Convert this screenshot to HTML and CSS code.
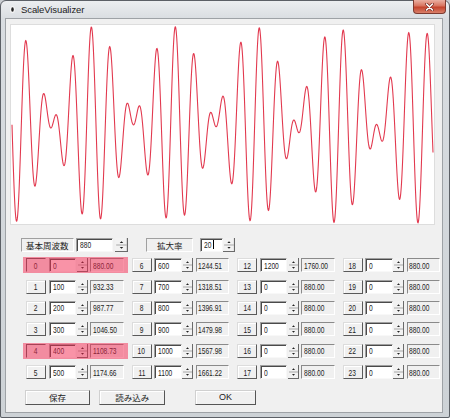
FILE: index.html
```html
<!DOCTYPE html>
<html lang="ja">
<head>
    <meta charset="UTF-8">
    <meta name="viewport" content="width=device-width, initial-scale=1.0">
    <title>ScaleVisualizer</title>
    <link rel="stylesheet" href="styles.css">
</head>
<body>

    <div class="window">
        <div class="titlebar">
            <svg class="app-icon" width="5" height="7" viewBox="0 0 5 7">
                <ellipse cx="2.5" cy="3.5" rx="2.5" ry="3.5" fill="#f4f4f4"/>
                <ellipse cx="2.5" cy="3.5" rx="1.3" ry="2.3" fill="#222"/>
            </svg>
            <span class="title">ScaleVisualizer</span>
            <div class="close">
                <svg width="9" height="8" viewBox="0 0 9 8">
                    <path d="M1.5 1l6 6M7.5 1l-6 6" stroke="#7a2a20" stroke-width="3" stroke-linecap="round"/>
                    <path d="M1.5 1l6 6M7.5 1l-6 6" stroke="#fff" stroke-width="1.6" stroke-linecap="round"/>
                </svg>
            </div>
        </div>

        <div class="client">
            <div class="plot">
                <svg id="wave" width="423" height="199" viewBox="0 0 423 199">
                    <polyline id="wave-line" fill="none" stroke="#e2394f" stroke-width="1.1" points=""/>
                </svg>
            </div>

            <div class="top-row">
                <div class="caption cap-base">基本周波数</div>
                <div class="edit ed-base"><span class="n">880</span></div>
                <svg class="spin spin-base" width="13" height="14" viewBox="0 0 11 14" preserveAspectRatio="none">
                    <rect width="11" height="14" fill="#f2f2f2"/>
                    <path d="M10.5 0v14M0 13.5h11" stroke="#6a6a6a"/>
                    <path d="M1 7h9" stroke="#a8a8a8"/>
                    <path d="M4 5h3L5.5 3.2zM4 9h3L5.5 10.8z" fill="#222"/>
                </svg>
                <div class="caption cap-zoom">拡大率</div>
                <div class="edit ed-zoom"><span class="n">20</span><span class="caret"></span></div>
                <svg class="spin spin-zoom" width="12" height="14" viewBox="0 0 11 14" preserveAspectRatio="none">
                    <rect width="11" height="14" fill="#f2f2f2"/>
                    <path d="M10.5 0v14M0 13.5h11" stroke="#6a6a6a"/>
                    <path d="M1 7h9" stroke="#a8a8a8"/>
                    <path d="M4 5h3L5.5 3.2zM4 9h3L5.5 10.8z" fill="#222"/>
                </svg>
            </div>

            <div class="grid" id="grid"></div>

            <div class="buttons">
                <button class="btn btn-save">保存</button>
                <button class="btn btn-load">読み込み</button>
                <button class="btn btn-ok">OK</button>
            </div>
        </div>
    </div>

    <script>
        const BASE = 880;
        const PX_PER_SEC = 18560;
        const cents = [0, 100, 200, 300, 400, 500, 600, 700, 800, 900, 1000, 1100,
                       1200, 0, 0, 0, 0, 0, 0, 0, 0, 0, 0, 0];
        const active = [0, 4];

        const SPIN = '<svg class="spin" width="11" height="14" viewBox="0 0 11 14">' +
            '<rect width="11" height="14" fill="#f2f2f2"/>' +
            '<path d="M10.5 0v14M0 13.5h11" stroke="#6a6a6a"/>' +
            '<path d="M1 7h9" stroke="#a8a8a8"/>' +
            '<path d="M4 5h3L5.5 3.2zM4 9h3L5.5 10.8z" fill="#222"/></svg>';

        const freqs = cents.map(c => BASE * Math.pow(2, c / 1200));

        // Build the 24 note rows
        const grid = document.getElementById("grid");
        cents.forEach((c, i) => {
            const cell = document.createElement("div");
            cell.className = "cell" + (active.includes(i) ? " on" : "");
            cell.innerHTML =
                '<div class="num"><span class="n">' + i + '</span></div>' +
                '<div class="edit"><span class="n">' + c + '</span></div>' +
                SPIN +
                '<div class="out"><span class="n">' + freqs[i].toFixed(2) + '</span></div>';
            grid.appendChild(cell);
        });

        // Draw the summed waveform of the active notes
        const pts = [];
        for (let x = 1; x <= 422; x += 0.25) {
            const t = (x - 1) / PX_PER_SEC;
            let v = 0;
            active.forEach(i => v += Math.sin(2 * Math.PI * freqs[i] * t));
            pts.push(x.toFixed(2) + "," + (99.8 + 49 * v).toFixed(2));
        }
        document.getElementById("wave-line").setAttribute("points", pts.join(" "));
    </script>

</body>
</html>
```

FILE: styles.css
```css
body {
    margin: 0;
    background: #c9cdd1;
    font-family: "Liberation Sans", "Noto Sans CJK JP", sans-serif;
    color: #222;
}
.window {
    width: 450px;
    height: 418px;
    box-sizing: border-box;
    border: 1px solid #5c6066;
    border-radius: 6px 6px 2px 2px;
    background: linear-gradient(to bottom, #eceef0 0, #d9dde1 18px, #cdd2d6 100%);
    padding: 0 6px 4px 4px;
    display: flex;
    flex-direction: column;
}
.titlebar {
    height: 17px;
    margin: 0 -6px 0 -4px;
    display: flex;
    align-items: center;
    position: relative;
}
.app-icon {
    margin-left: 9px;
}
.title {
    margin-left: 6px;
    font-size: 9.5px;
    color: #1b1b1b;
    letter-spacing: -0.1px;
}
.close {
    position: absolute;
    right: 3px;
    top: -1px;
    width: 33px;
    height: 14px;
    box-sizing: border-box;
    border: 1px solid #7d3a30;
    border-top: none;
    border-radius: 0 0 4px 4px;
    background: linear-gradient(to bottom, #eab0a2 0, #d8745f 45%, #c4432c 55%, #d9806a 100%);
    display: flex;
    justify-content: center;
    align-items: center;
}
.client {
    flex: 1;
    background: #f0f0f0;
    border: 1px solid #9ea2a6;
}
.plot {
    margin: 5px 0 0 4px;
    width: 425px;
    height: 201px;
    box-sizing: border-box;
    border: 1px solid #dddddd;
    background: #fff;
}
.plot svg {
    display: block;
}

/* shared control looks */
.n {
    display: inline-block;
    font-family: "Liberation Sans", sans-serif;
    font-size: 9.5px;
    line-height: 1;
    transform: scaleX(0.7);
    transform-origin: 0 50%;
}
.edit {
    box-sizing: border-box;
    height: 14px;
    background: #fff;
    border: 1px solid;
    border-color: #a0a0a0 #f8f8f8 #f8f8f8 #a0a0a0;
    box-shadow: inset 1px 1px #4a4a4a;
    padding-left: 3px;
    display: flex;
    align-items: center;
}
.spin {
    display: block;
    flex: none;
}
.caption {
    box-sizing: border-box;
    height: 14px;
    border: 1px solid;
    border-color: #a0a0a0 #ffffff #ffffff #a0a0a0;
    font-family: "Noto Sans CJK JP", sans-serif;
    font-size: 8.5px;
    display: flex;
    align-items: center;
    justify-content: center;
}

.top-row {
    display: flex;
    height: 14px;
    margin: 12.5px 0 0 14.7px;
}
.cap-base {
    width: 53px;
}
.ed-base {
    margin-left: 2.7px;
    width: 37px;
}
.spin-base {
    margin-left: 1.5px;
}
.cap-zoom {
    margin-left: 18.5px;
    width: 47px;
}
.ed-zoom {
    margin-left: 6.5px;
    width: 23px;
}
.spin-zoom {
    margin-left: 0.5px;
}
.caret {
    width: 1px;
    height: 9px;
    background: #000;
    margin-left: -1.6px;
}

.grid {
    display: grid;
    grid-template-columns: repeat(4, 105.6px);
    grid-template-rows: repeat(6, 16px);
    row-gap: 5.4px;
    grid-auto-flow: column;
    margin: 5.8px 0 0 16.5px;
}
.cell {
    position: relative;
    display: flex;
    align-items: center;
    padding-left: 3.5px;
}
.cell.on::after {
    content: "";
    position: absolute;
    top: 0;
    left: 0;
    right: 0;
    bottom: 0;
    background: rgba(244, 40, 80, 0.5);
}
.num {
    box-sizing: border-box;
    width: 20px;
    height: 14px;
    margin-right: 2.5px;
    border: 1px solid;
    border-color: #dcdcdc #5a5a5a #5a5a5a #dcdcdc;
    background: #f0f0f0;
    box-shadow: inset 1px 1px #fff;
    display: flex;
    align-items: center;
    justify-content: center;
}
.cell.on .num {
    border-color: #5a5a5a #f0f0f0 #f0f0f0 #5a5a5a;
    box-shadow: none;
}
.num .n {
    transform-origin: 50% 50%;
}
.cell .edit {
    width: 27.5px;
    margin-right: 0.5px;
}
.cell .spin {
    margin-right: 2.5px;
}
.out {
    box-sizing: border-box;
    width: 33.5px;
    height: 14px;
    border: 1px solid;
    border-color: #8a8a8a #ffffff #ffffff #8a8a8a;
    padding-left: 1.5px;
    display: flex;
    align-items: center;
}

.buttons {
    display: flex;
    margin-top: 9.7px;
}
.btn {
    box-sizing: border-box;
    height: 15px;
    padding: 0;
    border: 1px solid;
    border-color: #d0d0d0 #555555 #555555 #d0d0d0;
    background: #f0f0f0;
    box-shadow: inset 1px 1px #fff;
    font-family: "Noto Sans CJK JP", sans-serif;
    font-size: 8.5px;
    color: #222;
    line-height: 1;
}
.btn-save {
    margin-left: 19px;
    width: 65px;
}
.btn-load {
    margin-left: 9.3px;
    width: 65.7px;
}
.btn-ok {
    margin-left: 30px;
    width: 61px;
    font-family: "Liberation Sans", sans-serif;
    font-size: 9px;
}
```
